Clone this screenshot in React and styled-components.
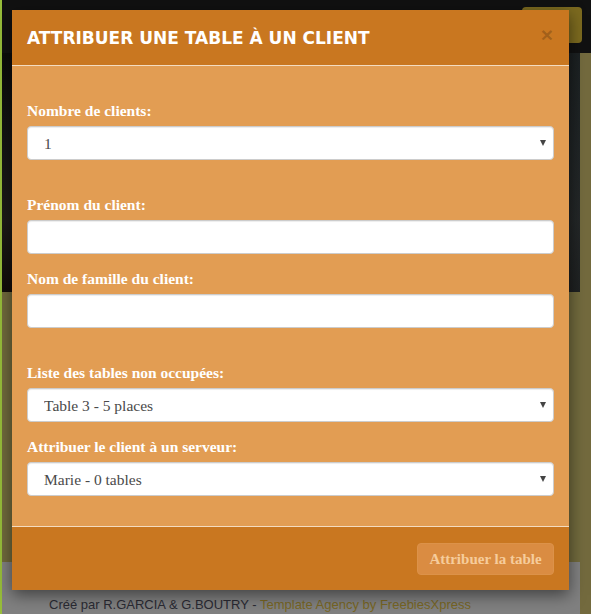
import React from "react";
import styled, { createGlobalStyle } from "styled-components";

const GlobalStyle = createGlobalStyle`
  html, body {
    margin: 0;
    padding: 0;
    overflow: hidden;
  }
  * { box-sizing: border-box; }
`;

const Page = styled.div`
  position: relative;
  width: 591px;
  height: 614px;
  display: grid;
  grid-template-columns: 2px 578px 1fr;
  grid-template-rows: 53px 1fr;
  background: #736a3e;
  overflow: hidden;
`;

const GreenStrip = styled.div`
  grid-column: 1;
  grid-row: 1 / span 2;
  background: #97bd3a;
`;

const Navbar = styled.div`
  grid-column: 2 / span 2;
  grid-row: 1;
  background: #111111;
  display: flex;
  justify-content: flex-end;
  padding: 7px 9px 10px 0;
`;

const NavButton = styled.div`
  width: 60px;
  border-radius: 4px;
  background: #7c6a1f;
`;

const Main = styled.div`
  grid-column: 2;
  grid-row: 2;
  display: flex;
  flex-direction: column;
`;

const Hero = styled.div`
  height: 239px;
  background:
    linear-gradient(90deg, rgba(0,0,0,0) 80%, rgba(40,48,50,0.6) 100%),
    linear-gradient(180deg, #0b0b0b 0%, #151515 40%, #1d1a18 70%, #110c0a 100%);
`;

const Section = styled.div`
  height: 270px;
  background: #716a3d;
`;

const SiteFooter = styled.div`
  flex: 1;
  background: #808080;
  padding: 35px 0 0 47px;
  font-family: "Liberation Sans", Arial, sans-serif;
  font-size: 13px;
  white-space: nowrap;
  color: #2a2a33;
`;

const FooterLink = styled.span`
  color: #786624;
`;

const Overlay = styled.div`
  position: absolute;
  inset: 0;
  padding: 10px 0 0 12px;
`;

const Modal = styled.div`
  width: 557px;
  display: flex;
  flex-direction: column;
  box-shadow: 0 5px 15px rgba(0, 0, 0, 0.5);
`;

const Header = styled.div`
  height: 56px;
  background: #c97720;
  border-bottom: 1px solid #f4dcc0;
  display: flex;
  align-items: center;
  justify-content: space-between;
  padding: 0 15px;
`;

const Title = styled.h4`
  margin: 0;
  font-family: "DejaVu Sans", Arial, sans-serif;
  font-weight: bold;
  font-size: 17px;
  color: #ffffff;
  text-transform: uppercase;
`;

const Close = styled.span`
  font-family: "Liberation Sans", Arial, sans-serif;
  font-weight: bold;
  font-size: 21px;
  line-height: 1;
  color: rgba(0, 0, 0, 0.2);
  margin-right: 1px;
  margin-top: -6px;
`;

const Body = styled.div`
  background: #e29d53;
  padding: 35px 15px 30px;
  border-bottom: 1px solid #f4dcc0;
`;

const Group = styled.div`
  margin-bottom: ${(p) => p.$gap}px;
`;

const Label = styled.label`
  display: block;
  height: 20px;
  line-height: 20px;
  margin-bottom: 5px;
  font-family: "Liberation Serif", "Times New Roman", serif;
  font-weight: bold;
  font-size: 15.5px;
  color: #ffffff;
`;

const SelectWrap = styled.div`
  position: relative;
`;

const Select = styled.select`
  display: block;
  width: 100%;
  height: 34px;
  appearance: none;
  -webkit-appearance: none;
  border: 1px solid #cccccc;
  border-radius: 4px;
  background: #ffffff;
  padding: 0 30px 0 16px;
  font-family: "Liberation Serif", "Times New Roman", serif;
  font-size: 15.5px;
  color: #4a4a4a;
  box-shadow: inset 0 1px 1px rgba(0, 0, 0, 0.075);
  outline: none;
`;

const Arrow = styled.span`
  position: absolute;
  right: 8px;
  top: 14px;
  width: 0;
  height: 0;
  border-left: 3px solid transparent;
  border-right: 3px solid transparent;
  border-top: 6px solid #444444;
  pointer-events: none;
`;

const Input = styled.input`
  display: block;
  width: 100%;
  height: 34px;
  border: 1px solid #cccccc;
  border-radius: 4px;
  background: #ffffff;
  padding: 0 12px;
  font-family: "Liberation Serif", "Times New Roman", serif;
  font-size: 15.5px;
  color: #555555;
  box-shadow: inset 0 1px 1px rgba(0, 0, 0, 0.075);
  outline: none;
`;

const Footer = styled.div`
  height: 63px;
  background: #c97720;
  display: flex;
  align-items: center;
  justify-content: flex-end;
  padding: 1px 15px 0;
`;

const Button = styled.button`
  width: 137px;
  height: 32px;
  border: 1px solid #dc9249;
  border-radius: 4px;
  background: #da8c42;
  font-family: "Liberation Serif", "Times New Roman", serif;
  font-weight: bold;
  font-size: 15px;
  color: #f6cc9c;
  padding: 0;
`;

const SelectField = ({ label, options, gap }) => (
  <Group $gap={gap}>
    <Label>{label}</Label>
    <SelectWrap>
      <Select defaultValue={options[0]}>
        {options.map((o) => (
          <option key={o}>{o}</option>
        ))}
      </Select>
      <Arrow />
    </SelectWrap>
  </Group>
);

const TextField = ({ label, gap }) => (
  <Group $gap={gap}>
    <Label>{label}</Label>
    <Input type="text" />
  </Group>
);

export default function App() {
  return (
    <>
      <GlobalStyle />
      <Page>
        <GreenStrip />
        <Navbar>
          <NavButton />
        </Navbar>
        <Main>
          <Hero />
          <Section />
          <SiteFooter>
            Créé par R.GARCIA &amp; G.BOUTRY - <FooterLink>Template Agency by FreebiesXpress</FooterLink>
          </SiteFooter>
        </Main>

        <Overlay>
          <Modal>
            <Header>
              <Title>Attribuer une table à un client</Title>
              <Close>×</Close>
            </Header>
            <Body>
              <SelectField label="Nombre de clients:" options={["1", "2", "3", "4", "5"]} gap={35} />
              <TextField label="Prénom du client:" gap={15} />
              <TextField label="Nom de famille du client:" gap={35} />
              <SelectField label="Liste des tables non occupées:" options={["Table 3 - 5 places"]} gap={15} />
              <SelectField label="Attribuer le client à un serveur:" options={["Marie - 0 tables"]} gap={0} />
            </Body>
            <Footer>
              <Button>Attribuer la table</Button>
            </Footer>
          </Modal>
        </Overlay>
      </Page>
    </>
  );
}
